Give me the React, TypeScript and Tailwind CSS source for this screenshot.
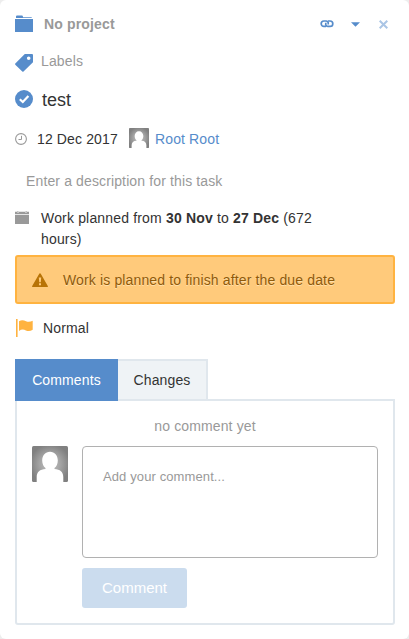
import React from "react";

function Avatar({ className, id }: { className: string; id: string }) {
  return (
    <svg viewBox="0 0 36 36" className={className} aria-label="Root Root">
      <defs>
        <radialGradient id={id} cx="50%" cy="50%" r="55%">
          <stop offset="0" stopColor="#c4c4c4" />
          <stop offset="0.55" stopColor="#a2a2a2" />
          <stop offset="1" stopColor="#808080" />
        </radialGradient>
      </defs>
      <rect width="36" height="36" rx="1.5" fill={`url(#${id})`} />
      <path d="M18 5.800c4.600 0 7.800 3.700 7.800 8.700 0 3.300-1.300 6-3.300 7.600v.9c5.500.2 8.800 3 8.800 8.200V36H4.700v-4.800c0-5.200 3.300-8 8.800-8.200v-.9c-2-1.600-3.300-4.300-3.300-7.600 0-5 3.200-8.700 7.800-8.700z" fill="#fff" />
    </svg>
  );
}

function Header() {
  return (
    <header className="flex h-6 items-center">
      <svg viewBox="0 0 18 18" className="h-[18px] w-[18px] fill-[#568ccb]">
        <path d="M1 3V1.500Q1 .6 2 .6h5q.8 0 .9.900l.2.7h7.900q1 0 1 .8z" />
        <rect y="4" width="18" height="13" />
      </svg>
      <h2 className="ml-[11px] text-sm font-bold tracking-[0.15px] text-[#999]">No project</h2>
      <div className="ml-auto flex items-center pr-[7px]">
        <svg viewBox="0 0 14 8" className="h-2 w-[14px] fill-none stroke-[#568ccb]" strokeWidth="1.700">
          <path d="M6 6.400H3.900A2.700 2.700 0 0 1 3.900 1H6a2.300 2.300 0 0 1 2.200 3v.6" />
          <path d="M8 1h2.100a2.700 2.700 0 0 1 0 5.400H8a2.300 2.300 0 0 1-2.200-3v-.6" />
        </svg>
        <svg viewBox="0 0 9 5" className="ml-[17px] h-[5px] w-[9px] fill-[#568ccb]">
          <path d="M0 .2h9L4.500 4.800z" />
        </svg>
        <svg viewBox="0 0 9 9" className="ml-[19px] h-[9px] w-[9px] stroke-[#aac5e5]" strokeWidth="2">
          <path d="M.7.7l7.600 7.600M8.300.7L.7 8.300" />
        </svg>
      </div>
    </header>
  );
}

function Details() {
  return (
    <>
      <div className="mt-[13px] flex h-6 items-center">
        <svg viewBox="0 0 18 18" className="mt-[3px] h-[18px] w-[18px] fill-[#568ccb]">
          <path fillRule="evenodd" d="M9.800 0H17q1 0 1 1v7.200L8.500 17.600q-.6.500-1.200 0L.3 10.700q-.5-.6 0-1.200zM13.700 2.500a1.800 1.800 0 1 0 0 3.600 1.800 1.800 0 0 0 0-3.600z" />
        </svg>
        <span className="ml-2 text-sm tracking-[0.13px] text-[#999]">Labels</span>
      </div>
      <div className="mt-[14px] flex h-6 items-center">
        <svg viewBox="0 0 18 18" className="h-[18px] w-[18px]">
          <circle cx="9" cy="9" r="9" fill="#568ccb" />
          <path d="M4.800 9.200l3 2.800 5.600-6" fill="none" stroke="#fff" strokeWidth="2.200" />
        </svg>
        <h1 className="relative top-px ml-[9px] text-lg text-[#333]">test</h1>
      </div>
      <div className="mt-4 flex h-6 items-center text-sm tracking-[0.13px] text-[#333]">
        <svg viewBox="0 0 12 12" className="h-3 w-3 fill-none stroke-[#999]">
          <circle cx="6" cy="6" r="5.400" strokeWidth="1.100" />
          <path d="M6.500 2.800v3.700H3.500" strokeWidth="1" />
        </svg>
        <span className="ml-[10px] w-[92px] whitespace-nowrap">12 Dec 2017</span>
        <Avatar id="assignee-shade" className="-mt-[2px] h-5 w-5" />
        <span className="ml-[6px] text-[#568ccb]">Root Root</span>
      </div>
      <p className="mt-5 pl-[11px] text-sm leading-[21px] tracking-[0.13px] text-[#999]">Enter a description for this task</p>
      <div className="mt-4 flex items-start text-sm leading-[21px] tracking-[0.17px] text-[#333]">
        <svg viewBox="0 0 14 13" className="mt-[3px] h-[13px] w-[14px] fill-[#999]">
          <path d="M0 .7h2v.8h2V.7h6v.8h2V.7h2V3H0zM0 3.700h14V13H0z" />
          <path d="M2.400 0h1v1.200h-1zM10.600 0h1v1.200h-1z" />
        </svg>
        <p className="ml-3 w-[300px]">
          Work planned from <b>30 Nov</b> to <b>27 Dec</b> (672 hours)
        </p>
      </div>
      <div className="mt-[5px] flex h-[49px] items-center rounded-[3px] border-2 border-[#ffb340] bg-[#ffca7b] pl-[15px] text-sm tracking-[0.14px] text-[#8f5a0a] [text-shadow:0_1px_0_#ffe0ad]">
        <svg viewBox="0 0 16 14" className="h-[14px] w-4">
          <path d="M8 .3q.6 0 .9.600l6.900 12q.4 1-.6 1H.8q-1 0-.6-1l6.900-12Q7.400.3 8 .3z" fill="#b87306" />
          <path d="M6.800 4.500h2.400l-.4 4.700H7.200zM7 10.300h2v2H7z" fill="#ffca7b" />
        </svg>
        <span className="ml-[15px]">Work is planned to finish after the due date</span>
      </div>
      <div className="mt-3 flex h-6 items-center text-sm tracking-[0.13px] text-[#333]">
        <svg viewBox="0 0 18 18" className="h-[18px] w-[18px] fill-[#ffb340]">
          <path d="M1 0h1.600v18H1zM4 2.200c2.600-1.700 4.800-1.100 7 0 2.200 1 4.300.8 6.700-.5v9.100c-2.400 1.500-4.600 1.600-6.800.6-2.300-1.100-4.500-1.200-6.900.5z" />
        </svg>
        <span className="ml-[10px]">Normal</span>
      </div>
    </>
  );
}

function Discussion() {
  return (
    <section className="mt-[19px]">
      <div className="relative flex h-[42px] text-sm tracking-[0.13px]">
        <button className="h-[42px] w-[103px] bg-[#568ccb] text-white">Comments</button>
        <button className="h-10 w-[90px] border-t-2 border-r-2 border-[#e0e7ed] bg-[#eff3f6] text-[#333]">Changes</button>
      </div>
      <div className="-mt-[2px] h-[226px] rounded-b-[3px] border-2 border-[#e0e7ed] px-[15px] pt-[15px]">
        <p className="text-center text-sm leading-[21px] tracking-[0.13px] text-[#999]">no comment yet</p>
        <div className="mt-[9px] flex">
          <Avatar id="author-shade" className="h-9 w-9" />
          <div className="ml-[14px] flex-1">
            <textarea
              placeholder="Add your comment..."
              className="block h-28 w-full resize-none rounded-[4px] border border-[#b1b1b1] px-5 py-5 text-[13px] leading-[20px] tracking-[0.11px] text-[#333] placeholder:text-[#999]"
            />
            <button className="mt-[10px] h-10 w-[105px] rounded-[3px] bg-[#cbdcee] text-[15px] text-white">Comment</button>
          </div>
        </div>
      </div>
    </section>
  );
}

export default function App() {
  return (
    <div className="h-[639px] w-[409px] bg-[#ededed] font-['Liberation_Sans',Arial,sans-serif]">
      <main className="h-full rounded-[6px] bg-white pt-3 pr-[14px] pb-[14px] pl-[15px]">
        <Header />
        <Details />
        <Discussion />
      </main>
    </div>
  );
}
